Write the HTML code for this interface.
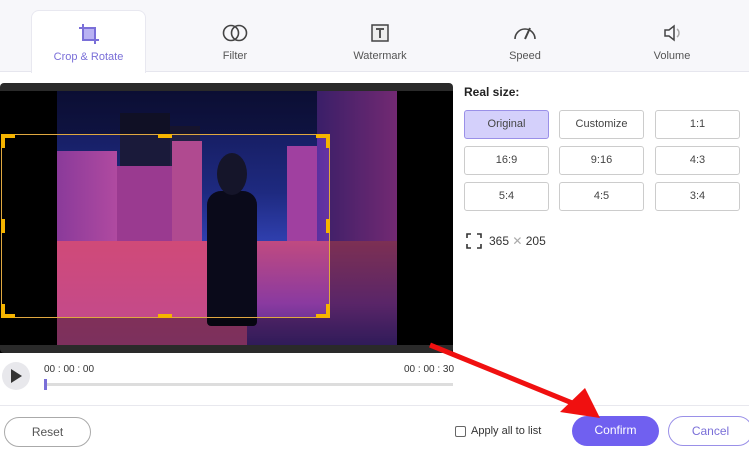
<!DOCTYPE html>
<html><head><style>
*{margin:0;padding:0;box-sizing:border-box}
body{width:749px;height:450px;background:#fff;font-family:"Liberation Sans",sans-serif;position:relative;overflow:hidden}
.top{position:absolute;left:0;top:0;width:749px;height:72px;background:#f7f7fa;border-bottom:1px solid #e6e6ee}
.tab{position:absolute;top:10px;height:63px;text-align:center;font-size:11px;color:#555}
.tab.act{background:#fff;border:1px solid #e8e8f0;border-bottom:none;border-radius:8px 8px 0 0;color:#7a6fd8}
.tab svg{display:block;margin:12px auto 6px}
.btn{position:absolute;width:85px;height:29px;border:1px solid #ccc;border-radius:3px;font-size:11px;color:#444;text-align:center;line-height:27px;background:#fff}
.btn.sel{background:#d4d0fb;border-color:#9a90e8}
.pill{position:absolute;height:30px;border-radius:15px;font-size:12px;text-align:center;line-height:28px}
.a{position:absolute}
.dim{position:absolute;background:rgba(0,0,0,.35)}
.h{position:absolute;background:#f5b400}
</style></head><body>
<div class="top">
<div class="tab act" style="left:31px;width:115px"><svg width="22" height="22" viewBox="0 0 22 22"><rect x="6" y="6" width="10" height="10" fill="#b9b2f3"/><path d="M5 1v16h16M1 5h16v16" stroke="#7a6fd8" stroke-width="2" fill="none"/></svg>Crop &amp; Rotate</div>
<div class="tab" style="left:180px;width:110px"><svg width="26" height="22" viewBox="0 0 26 22"><circle cx="9" cy="11" r="7.5" fill="none" stroke="#444" stroke-width="1.6"/><circle cx="17" cy="11" r="7.5" fill="none" stroke="#444" stroke-width="1.6"/></svg>Filter</div>
<div class="tab" style="left:325px;width:110px"><svg width="22" height="22" viewBox="0 0 22 22"><rect x="3" y="3" width="16" height="16" fill="#eee" stroke="#444" stroke-width="1.5"/><path d="M7 7h8M11 7v9" stroke="#555" stroke-width="2"/></svg>Watermark</div>
<div class="tab" style="left:470px;width:110px"><svg width="26" height="22" viewBox="0 0 26 22"><path d="M3 17A10 10 0 0 1 23 17" fill="none" stroke="#444" stroke-width="1.6"/><path d="M13 17l5-11" stroke="#444" stroke-width="2"/></svg>Speed</div>
<div class="tab" style="left:617px;width:110px"><svg width="22" height="22" viewBox="0 0 22 22"><path d="M4 8h4l5-4v14l-5-4H4z" fill="none" stroke="#444" stroke-width="1.5"/><path d="M16 7a5 5 0 0 1 0 8" fill="none" stroke="#aaa" stroke-width="1.5"/></svg>Volume</div>
</div>
<!-- video -->
<div class="a" style="left:0;top:83px;width:453px;height:270px;background:#000;border-top:8px solid #2a2a2a;border-radius:4px 4px 0 0"></div>
<div class="a" style="left:57px;top:91px;width:340px;height:254px;overflow:hidden;background:linear-gradient(#121650 0%,#1e2a80 40%,#3040b0 60%,#3040b0 100%)">
 <div class="a" style="left:63px;top:22px;width:50px;height:140px;background:#1a1a3a"></div>
 <div class="a" style="left:113px;top:35px;width:30px;height:125px;background:#222045"></div>
 <div class="a" style="left:0;top:60px;width:60px;height:110px;background:linear-gradient(90deg,#8a3a9a,#b04aa0)"></div>
 <div class="a" style="left:60px;top:75px;width:55px;height:95px;background:#9a3a90"></div>
 <div class="a" style="left:115px;top:50px;width:30px;height:115px;background:#b04a90"></div>
 <div class="a" style="left:230px;top:55px;width:40px;height:110px;background:#a040a0"></div>
 <div class="a" style="left:260px;top:0;width:80px;height:190px;background:linear-gradient(90deg,#5a30a0,#b040b0)"></div>
 <div class="a" style="left:0;top:150px;width:340px;height:104px;background:linear-gradient(#c04a80,#8a3aa0 60%,#4a2a8a)"></div>
 <div class="a" style="left:0;top:150px;width:190px;height:104px;background:linear-gradient(#d04a78,#c04a90)"></div>
 <div class="a" style="left:150px;top:100px;width:50px;height:135px;background:#0a0a1a;border-radius:14px 14px 4px 4px"></div>
 <div class="a" style="left:160px;top:62px;width:30px;height:42px;background:#15152a;border-radius:50%"></div>
</div>
<div class="dim" style="left:57px;top:91px;width:340px;height:43px"></div>
<div class="dim" style="left:57px;top:317px;width:340px;height:28px"></div>
<div class="dim" style="left:329px;top:134px;width:68px;height:183px"></div>
<div class="a" style="left:1px;top:134px;width:329px;height:184px;border:1px solid #e0a840"></div>
<div class="h" style="left:1px;top:134px;width:14px;height:4px"></div><div class="h" style="left:1px;top:134px;width:4px;height:14px"></div>
<div class="h" style="left:316px;top:134px;width:14px;height:4px"></div><div class="h" style="left:326px;top:134px;width:4px;height:14px"></div>
<div class="h" style="left:1px;top:314px;width:14px;height:4px"></div><div class="h" style="left:1px;top:304px;width:4px;height:14px"></div>
<div class="h" style="left:316px;top:314px;width:14px;height:4px"></div><div class="h" style="left:326px;top:304px;width:4px;height:14px"></div>
<div class="h" style="left:158px;top:134px;width:14px;height:4px"></div><div class="h" style="left:158px;top:314px;width:14px;height:4px"></div>
<div class="h" style="left:1px;top:219px;width:4px;height:14px"></div><div class="h" style="left:326px;top:219px;width:4px;height:14px"></div>
<div class="a" style="left:0;top:345px;width:453px;height:8px;background:#2a2a2a;border-radius:0 0 4px 4px"></div>
<!-- controls -->
<div class="a" style="left:2px;top:362px;width:28px;height:28px;border-radius:50%;background:#e8e8ec"></div>
<div class="a" style="left:11px;top:369px;border-left:11px solid #333;border-top:7px solid transparent;border-bottom:7px solid transparent"></div>
<div class="a" style="left:44px;top:364px;font-size:10px;color:#333">00 : 00 : 00</div>
<div class="a" style="left:404px;top:364px;font-size:10px;color:#333">00 : 00 : 30</div>
<div class="a" style="left:44px;top:383px;width:409px;height:3px;background:#ddd"></div>
<div class="a" style="left:44px;top:379px;width:3px;height:11px;background:#7a6fd8"></div>
<div class="a" style="left:0;top:405px;width:749px;height:1px;background:#e8e8ee"></div>
<!-- right panel -->
<div class="a" style="left:464px;top:85px;font-size:12px;font-weight:bold;color:#222">Real size:</div>
<div class="btn sel" style="left:464px;top:110px">Original</div>
<div class="btn" style="left:559px;top:110px">Customize</div>
<div class="btn" style="left:655px;top:110px">1:1</div>
<div class="btn" style="left:464px;top:146px">16:9</div>
<div class="btn" style="left:559px;top:146px">9:16</div>
<div class="btn" style="left:655px;top:146px">4:3</div>
<div class="btn" style="left:464px;top:182px">5:4</div>
<div class="btn" style="left:559px;top:182px">4:5</div>
<div class="btn" style="left:655px;top:182px">3:4</div>
<svg style="position:absolute;left:466px;top:233px" width="16" height="16" viewBox="0 0 16 16"><path d="M1 5V1h4M11 1h4v4M15 11v4h-4M5 15H1v-4" fill="none" stroke="#333" stroke-width="1.6"/></svg>
<div class="a" style="left:489px;top:234px;font-size:12px;color:#333">365 <span style="color:#aaa">✕</span> 205</div>
<!-- bottom -->
<div class="pill" style="left:4px;top:417px;width:87px;border:1px solid #aaa;color:#555">Reset</div>
<div class="a" style="left:455px;top:426px;width:11px;height:11px;border:1px solid #666;border-radius:2px"></div>
<div class="a" style="left:471px;top:425px;font-size:11px;color:#333">Apply all to list</div>
<div class="pill" style="left:572px;top:416px;width:87px;background:#7060f0;color:#fff">Confirm</div>
<div class="pill" style="left:668px;top:416px;width:85px;border:1px solid #9a90e8;color:#7a6fd8">Cancel</div>
<!-- arrow -->
<svg style="position:absolute;left:0;top:0" width="749" height="450"><path d="M430 345L582 407" stroke="#f01010" stroke-width="5"/><path d="M600 418L560 412L585 388Z" fill="#f01010"/></svg>
</body></html>
